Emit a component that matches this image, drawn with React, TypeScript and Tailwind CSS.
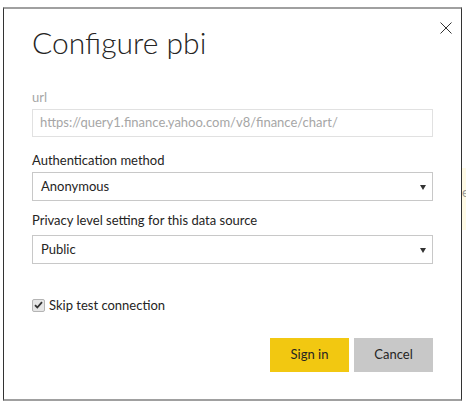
import React from 'react';

const body = 'font-["Lato","Open_Sans",sans-serif]';

function SelectBox({ value }: { value: string }) {
  return (
    <div className="flex h-[29px] items-center justify-between border border-[#c8c8c8] bg-white pl-[8px] pr-[6px] text-[13px] text-[#252423]">
      <span className="mt-[1px]">{value}</span>
      <svg width="6" height="5" viewBox="0 0 6 5" className="mt-[1px]">
        <path d="M0 0h6L3 5z" fill="#333" />
      </svg>
    </div>
  );
}

export default function App() {
  return (
    <div className={`flex h-[405px] w-[466px] overflow-hidden bg-white ${body}`}>
      <div className="relative ml-[3px] mt-[7px] flex h-[394px] w-[459px] shrink-0 flex-col border-x border-y-2 border-x-[#333] border-y-[#a0a0a0] px-[28px]">
        {/* close */}
        <button type="button" className="absolute right-[9px] top-[13px] h-3 w-3">
          <svg width="12" height="12" viewBox="0 0 12 12">
            <path d="M0.5 0.5l11 11M11.5 0.5l-11 11" stroke="#333" strokeWidth={1} fill="none" />
          </svg>
        </button>

        <h1 className="mt-[13px] h-[40px] text-[30px] font-light leading-[40px] text-[#252423]">Configure pbi</h1>

        <label className="mt-[25px] h-[20px] text-[13px] leading-[20px] text-[#a6a6a6]">url</label>
        <div className="mt-[2px] flex h-[28px] items-center border border-[#e1e1e1] pl-[7px] text-[13px] text-[#a6a6a6]">
          https://query1.finance.yahoo.com/v8/finance/chart/
        </div>

        <label className="mt-[13px] h-[20px] text-[13px] leading-[20px] text-[#252423]">Authentication method</label>
        <div className="mt-[2px]">
          <SelectBox value="Anonymous" />
        </div>

        <label className="mt-[9px] h-[20px] text-[13px] leading-[20px] text-[#252423]">
          Privacy level setting for this data source
        </label>
        <div className="mt-[5px]">
          <SelectBox value="Public" />
        </div>

        <div className="mt-[31px] flex items-center gap-[4px] text-[13px] leading-[20px] text-[#252423]">
          <span className="flex h-[13px] w-[13px] items-center justify-center rounded-[2px] border border-[#b4b4b4] bg-[#e6e6e6]">
            <svg width="9" height="8" viewBox="0 0 9 8">
              <path d="M1 4.2l2.3 2.3L8 1.2" stroke="#333" strokeWidth={1.8} fill="none" />
            </svg>
          </span>
          Skip test connection
        </div>

        <div className="mt-[23px] flex justify-end gap-[5px] text-[13px]">
          <button type="button" className="h-[34px] w-[79px] bg-[#f2c811] text-[#252423]">Sign in</button>
          <button type="button" className="h-[34px] w-[79px] bg-[#c8c8c8] text-[#252423]">Cancel</button>
        </div>
      </div>
      <div className="mt-[168px] h-[62px] flex-1 overflow-hidden bg-[#fffbe6] pt-[17px] text-[13px] leading-[14px] text-[#999]">
        ec
      </div>
    </div>
  );
}
